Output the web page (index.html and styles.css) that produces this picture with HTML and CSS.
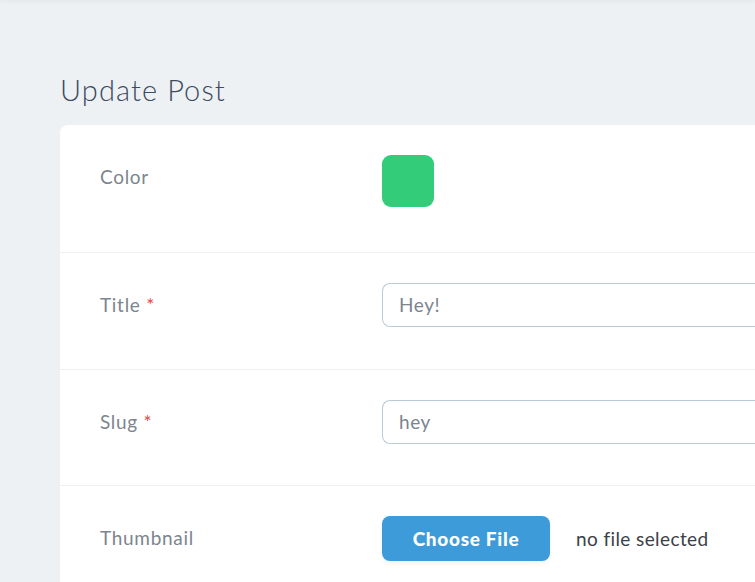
FILE: index.html
```html
<!DOCTYPE html>
<html>
<head>
<meta charset="utf-8">
<link rel="stylesheet" href="styles.css">
</head>
<body>
<div class="topbar"></div>
<main class="content">
  <h1 class="heading">Update Post</h1>
  <div class="card">
    <div class="row row-color">
      <div class="label">Color</div>
      <div class="field"><div class="swatch"></div></div>
    </div>
    <div class="row">
      <div class="label">Title <span class="req">*</span></div>
      <div class="field"><div class="input">Hey!</div></div>
    </div>
    <div class="row row-slug">
      <div class="label">Slug <span class="req">*</span></div>
      <div class="field"><div class="input">hey</div></div>
    </div>
    <div class="row row-file">
      <div class="label">Thumbnail</div>
      <div class="field file">
        <div class="btn">Choose File</div>
        <span class="nofile">no file selected</span>
      </div>
    </div>
  </div>
</main>
</body>
</html>
```
FILE: styles.css
```css
html, body {
  margin: 0;
  padding: 0;
}
body {
  background: #eef1f4;
  font-family: Lato, "Noto Sans", sans-serif;
  width: 755px;
  height: 582px;
  overflow: hidden;
  position: relative;
}
.topbar {
  height: 0;
  box-shadow: 0 0 4px 1px rgba(0,0,0,0.08);
}
.content {
  padding: 70px 0 0 60px;
}
.heading {
  margin: 0 0 15px 0;
  font-weight: 300;
  font-size: 29px;
  line-height: 40px;
  color: #3c4b5f;
  letter-spacing: 1.1px;
}
.card {
  background: #fff;
  border-radius: 8px 0 0 0;
  width: 720px;
}
.row {
  display: flex;
  padding: 30px 0 42px 40px;
  border-bottom: 1px solid #eef1f4;
}
.row-color {
  padding-bottom: 45px;
}
.row-slug {
  padding-bottom: 41px;
}
.label {
  width: 282px;
  flex: none;
  font-size: 19px;
  letter-spacing: 0.7px;
  color: #7c858e;
  line-height: 44px;
}
.req {
  color: #e74444;
}
.field {
  flex: 1;
}
.swatch {
  width: 52px;
  height: 52px;
  border-radius: 9px;
  background: #33cc79;
}
.input {
  height: 42px;
  border: 1px solid #bacad6;
  border-right: none;
  border-radius: 8px 0 0 8px;
  padding-left: 16px;
  font-size: 19px;
  letter-spacing: 0.6px;
  line-height: 42px;
  color: #7c858e;
}
.file {
  display: flex;
  align-items: center;
  gap: 26px;
}
.btn {
  width: 168px;
  height: 45px;
  border-radius: 8px;
  background: #3d9bd9;
  color: #fff;
  font-weight: 900;
  font-size: 19px;
  letter-spacing: 0.7px;
  line-height: 45px;
  text-align: center;
  box-shadow: 0 2px 4px rgba(0,0,0,0.06);
}
.nofile {
  font-size: 19px;
  letter-spacing: 0.4px;
  color: #3c4047;
}
```
